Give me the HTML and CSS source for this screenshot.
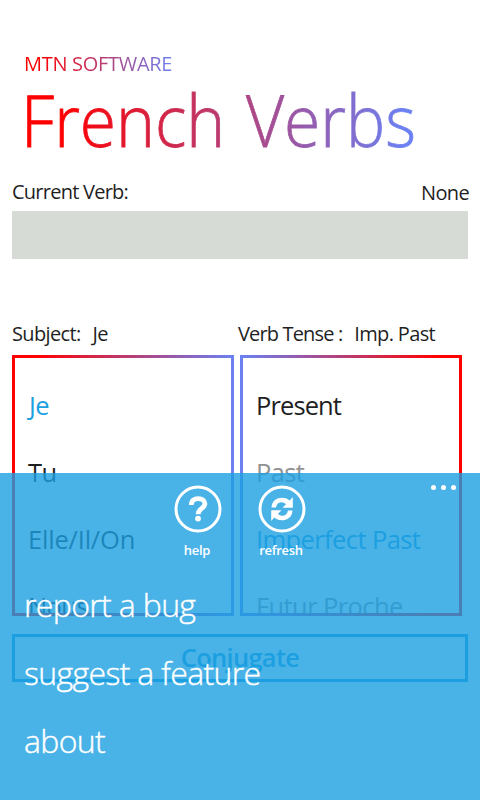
FILE: index.html
```html
<!DOCTYPE html>
<html lang="en">
<head>
<meta charset="utf-8">
<title>French Verbs</title>
<link rel="stylesheet" href="styles.css">
</head>
<body>
<main class="page">
  <header class="header">
    <div class="brand">MTN SOFTWARE</div>
    <h1 class="title">French Verbs</h1>
  </header>
  <div class="row current"><span>Current Verb:</span><span class="none">None</span></div>
  <div class="verb-input"></div>
  <div class="row choices">
    <div class="choice subject"><span>Subject:</span><span>Je</span></div>
    <div class="choice"><span class="tense">Verb Tense :</span><span>Imp. Past</span></div>
  </div>
  <div class="lists">
    <ul class="list list-subject">
      <li class="selected">Je</li>
      <li>Tu</li>
      <li class="elle">Elle/Il/On</li>
      <li>Nous</li>
    </ul>
    <ul class="list list-tense">
      <li class="present">Present</li>
      <li class="dim">Past</li>
      <li class="selected">Imperfect Past</li>
      <li class="dim">Futur Proche</li>
    </ul>
  </div>
  <button class="conjugate">Conjugate</button>
</main>
<nav class="appbar">
  <div class="actions">
    <div class="action">
      <svg width="48" height="48" viewBox="0 0 48 48"><circle cx="24" cy="24" r="22" fill="none" stroke="#fff" stroke-width="3"/><path d="M17.300 20C17.300 15.500 20.300 13.600 24.200 13.600C28 13.600 30.900 15.500 30.900 18.700C30.900 23.300 24 23.600 24 29.300" fill="none" stroke="#fff" stroke-width="4.8"/><circle cx="24" cy="33.600" r="2.900" fill="#fff"/></svg>
      <span>help</span>
    </div>
    <div class="action">
      <svg width="48" height="48" viewBox="0 0 48 48"><circle cx="24" cy="24" r="22" fill="none" stroke="#fff" stroke-width="3"/><g id="arrow" fill="#fff"><path d="M13.500 22.500C14 15.500 19 12.700 24 12.700C27.500 12.700 30 14 31.700 15.500L34.800 12V22.700H24.500L28 19.300C25 15.800 18.700 16.800 18 22.500Z"/></g><use href="#arrow" transform="rotate(180 24 24)"/></svg>
      <span>refresh</span>
    </div>
  </div>
  <div class="dots"><i></i><i></i><i></i></div>
  <ul class="menu">
    <li>report a bug</li>
    <li>suggest a feature</li>
    <li>about</li>
  </ul>
</nav>
</body>
</html>
```
FILE: styles.css
```css
* { box-sizing: border-box; }
body { margin: 0; width: 480px; height: 800px; overflow: hidden; position: relative; background: #fff; color: #1f1f1f; font-family: "Open Sans", "Noto Sans", sans-serif; }
ul, h1 { margin: 0; padding: 0; list-style: none; }
.page { padding: 50px 12px 0; }
.header { padding-left: 12px; display: flex; flex-direction: column; align-items: flex-start; }
.brand, .title { color: transparent; background-clip: text; -webkit-background-clip: text; white-space: nowrap; }
.brand { background-image: linear-gradient(90deg, #f00 10%, #6b80f2); font-size: 20px; line-height: 28px; letter-spacing: -.3px; }
.title { background-image: linear-gradient(90deg, #f00 10%, #6b80f2 97%); font-size: 72px; line-height: 84px; font-weight: 300; -webkit-text-stroke: .8px transparent; word-spacing: 4px; transform: scaleX(.916); transform-origin: left; margin: -1px 0 1px -3px; }
.row { display: flex; font-size: 20px; line-height: 28px; letter-spacing: -.65px; white-space: nowrap; }
.current { margin-top: 16px; justify-content: space-between; }
.current span:first-child { letter-spacing: -.75px; }
.none { padding-top: 1px; margin-right: -1px; height: 28px; }
.verb-input { margin-top: 5px; height: 48px; background: #d6dbd5; }
.choices { margin-top: 61px; }
.choice { display: flex; gap: 12px; }
.subject { width: 226px; }
.tense { letter-spacing: -.85px; }
.lists { display: flex; gap: 6px; margin-top: 7px; }
.list { width: 222px; height: 261px; border: 3px solid; padding: 14px 12px 0 13px; overflow: hidden; font-size: 25.500px; line-height: 67px; letter-spacing: -.6px; white-space: nowrap; }
.list-subject { border-image: linear-gradient(90deg, #f00 10%, #6b80f2) 1; }
.list-tense { border-image: linear-gradient(90deg, #6b80f2, #f00 90%) 1; }
.list-subject li:first-child { padding-left: 1px; }
.selected { color: #1ba1e2; }
.dim { color: #929292; }
.elle { letter-spacing: -.2px; }
.present { letter-spacing: -.9px; }
.conjugate { display: block; width: 456px; height: 48px; margin-top: 18px; padding: 0 0 2px; border: 3px solid #1ba1e2; background: transparent; color: #1ba1e2; font: 600 25.500px/40px "Open Sans", sans-serif; letter-spacing: -.7px; }
.appbar { position: absolute; left: 0; right: 0; top: 473px; height: 327px; background: rgba(27, 159, 225, .8); color: #fff; }
.actions { display: flex; justify-content: center; gap: 36px; padding-top: 12px; }
.action { width: 48px; display: flex; flex-direction: column; align-items: center; font-size: 13px; font-weight: 600; line-height: 18px; letter-spacing: -.3px; }
.action svg { display: block; }
.action span { margin: 8px 2px 0 0; }
.dots { position: absolute; right: 24px; top: 12px; display: flex; gap: 5px; }
.dots i { width: 5px; height: 5px; border-radius: 50%; background: #fff; }
.menu { padding: 12px 0 0 24px; font-size: 32px; font-weight: 300; -webkit-text-stroke: .4px #fff; line-height: 68px; letter-spacing: -.65px; }
```
